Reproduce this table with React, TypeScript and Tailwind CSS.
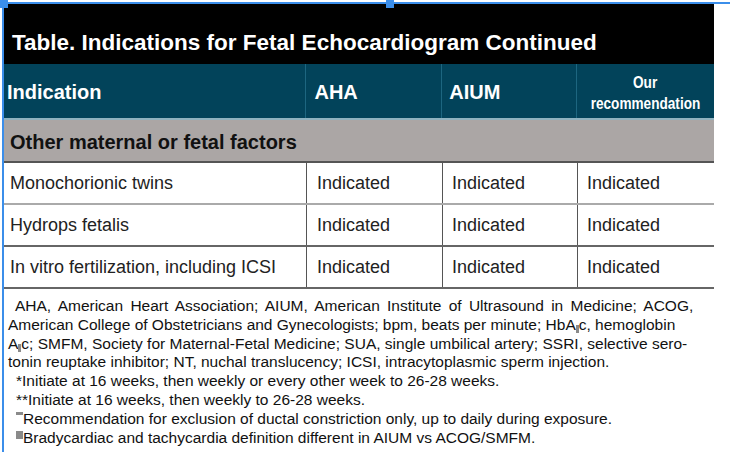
import React from "react";

const rows = [
  "Monochorionic twins",
  "Hydrops fetalis",
  "In vitro fertilization, including ICSI",
];

const Mark: React.FC<{ className: string }> = ({ className }) => (
  <span className={`inline-block bg-[#8a8a8a] ${className}`} />
);

export default function App() {
  return (
    <div className="relative w-[730px] h-[452px] bg-white overflow-hidden font-['Liberation_Sans',Arial,sans-serif]">
      {/* selection guides */}
      <div className="absolute left-0 top-[2px] w-[730px] h-[2px] bg-[#3b8eea]" />
      <div className="absolute left-[2px] top-0 w-[2px] h-[452px] bg-[#3b8eea]" />
      <div className="absolute left-0 top-0 w-[8px] h-[8px] bg-[#3b8eea]" />
      <div className="absolute left-[386px] top-0 w-[8px] h-[8px] bg-[#3b8eea]" />

      <div className="pl-[3px] pt-[4px]">
        <div className="w-[711px]">
          <div className="h-[60px] bg-black flex items-end pb-[10px] pl-[9px]">
            <h1 className="text-white font-bold text-[22.5px] leading-none">
              Table. Indications for Fetal Echocardiogram Continued
            </h1>
          </div>

          <div className="h-[56px] bg-[#02435a] flex text-white font-bold border-b-2 border-[#8fb3c0]">
            <div className="w-[304px] flex items-center pl-[4px] pt-[2px] text-[20px] border-r border-[#1d6680]">Indication</div>
            <div className="w-[136px] flex items-center pl-[8px] pt-[2px] text-[20px] border-r border-[#1d6680]">AHA</div>
            <div className="w-[135px] flex items-center pl-[7px] pt-[2px] text-[20px] border-r border-[#1d6680]">AIUM</div>
            <div className="flex-1 flex flex-col items-center justify-center pt-[4px] text-[17px] leading-[21px]">
              <span className="inline-block scale-x-[0.8]">Our</span>
              <span className="inline-block scale-x-[0.8]">recommendation</span>
            </div>
          </div>

          <div className="h-[43px] bg-[#aba6a5] flex items-center pl-[7px] pt-[3px] border-b-2 border-[#555]">
            <span className="font-bold text-[20px] text-[#111]">Other maternal or fetal factors</span>
          </div>

          {rows.map((r, i) => (
            <div
              key={r}
              className={`h-[42px] flex text-[18px] text-[#222] border-b-2 ${i === 0 ? "border-[#aaa]" : "border-[#666]"}`}
            >
              <div className="w-[304px] flex items-center pl-[7px] pt-[1px] border-r border-[#555]">{r}</div>
              <div className="w-[136px] flex items-center pl-[10px] pt-[1px] border-r border-[#555]">Indicated</div>
              <div className="w-[135px] flex items-center pl-[9px] pt-[1px] border-r border-[#555]">Indicated</div>
              <div className="flex-1 flex items-center pl-[9px] pt-[1px]">Indicated</div>
            </div>
          ))}
        </div>

        <div className="pt-[8px] pl-[5px] text-[15.5px] leading-[18.8px] text-[#111]">
          <p className="pl-[7px] [word-spacing:3px]">AHA, American Heart Association; AIUM, American Institute of Ultrasound in Medicine; ACOG,</p>
          <p>
            American College of Obstetricians and Gynecologists; bpm, beats per minute; HbA
            <Mark className="w-[3px] h-[8px] align-[-3px]" />c, hemoglobin
          </p>
          <p>
            A<Mark className="w-[3px] h-[8px] align-[-3px]" />c; SMFM, Society for Maternal-Fetal Medicine; SUA, single umbilical artery; SSRI, selective sero-
          </p>
          <p>tonin reuptake inhibitor; NT, nuchal translucency; ICSI, intracytoplasmic sperm injection.</p>
          <p className="pl-[8px]">*Initiate at 16 weeks, then weekly or every other week to 26-28 weeks.</p>
          <p className="pl-[8px]">**Initiate at 16 weeks, then weekly to 26-28 weeks.</p>
          <p className="pl-[8px]">
            <Mark className="w-[7px] h-[3px] align-[9px]" />Recommendation for exclusion of ductal constriction only, up to daily during exposure.
          </p>
          <p className="pl-[8px]">
            <Mark className="w-[7px] h-[8px] align-[4px]" />Bradycardiac and tachycardia definition different in AIUM vs ACOG/SMFM.
          </p>
        </div>
      </div>
    </div>
  );
}
